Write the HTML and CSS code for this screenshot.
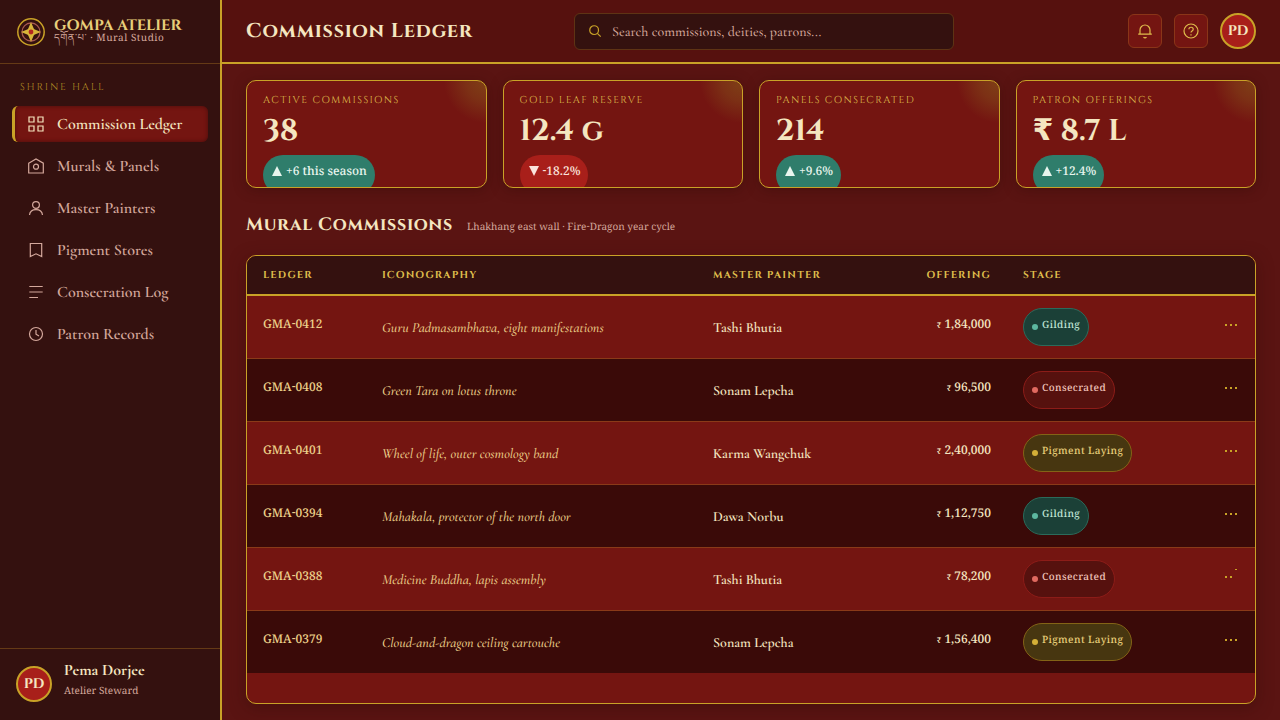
FILE: index.html
```html
<!DOCTYPE html>
<html lang="en">
<head>
<meta charset="utf-8">
<title>Gompa Atelier – Commission Ledger</title>
<link rel="stylesheet" href="styles.css">
</head>
<body>
<div class="app">
  <aside class="sidebar">
    <div class="brand">
      <svg class="brand-mark" viewBox="0 0 28 28" width="28" height="28" aria-hidden="true">
        <circle cx="14" cy="14" r="13.2" fill="none" stroke="#c9a227" stroke-width="1.5"/>
        <circle cx="14" cy="14" r="9" fill="none" stroke="#a85a50" stroke-width="1.3"/>
        <path d="M14 4l2.600 6.200q.4.8 1.200 1.200L24 14l-6.200 2.600q-.8.4-1.200 1.200L14 24l-2.600-6.200q-.4-.8-1.200-1.200L4 14l6.200-2.600q.8-.4 1.200-1.200z" fill="#d8b43a"/>
        <circle cx="14" cy="14" r="2.400" fill="#b3261e"/>
      </svg>
      <div class="brand-text">
        <div class="brand-name">GOMPA ATELIER</div>
        <div class="brand-sub"><span lang="bo">དགོན་པ་</span> · Mural Studio</div>
      </div>
    </div>
    <nav class="nav" aria-label="Shrine Hall">
      <div class="nav-title">SHRINE HALL</div>
      <a class="nav-item active" href="#" aria-current="page"><svg class="icon" viewBox="0 0 16 16"><path d="M1 1h5v5H1zM10 1h5v5h-5zM1 10h5v5H1zM10 10h5v5h-5z"/></svg>Commission Ledger</a>
      <a class="nav-item" href="#"><svg class="icon" viewBox="0 0 16 16"><path d="M.7 5.200L8 1l7.300 4.200V15H.7z"/><circle cx="8" cy="8.700" r="2.500"/></svg>Murals &amp; Panels</a>
      <a class="nav-item" href="#"><svg class="icon" viewBox="0 0 16 16"><circle cx="8" cy="5" r="3.400"/><path d="M1.500 15c.4-3.600 3-5.300 6.500-5.300s6.100 1.700 6.500 5.300"/></svg>Master Painters</a>
      <a class="nav-item" href="#"><svg class="icon" viewBox="0 0 16 16"><path d="M2.300 1.500h11.400v13L8 11.800l-5.700 2.700z"/></svg>Pigment Stores</a>
      <a class="nav-item" href="#"><svg class="icon" viewBox="0 0 16 16"><path d="M1.300 2.500h13.400M1.300 8h13.400M1.300 13.500h8.700"/></svg>Consecration Log</a>
      <a class="nav-item" href="#"><svg class="icon" viewBox="0 0 16 16"><circle cx="8" cy="8" r="6.500"/><path d="M8 4v4.200l3 1.800"/></svg>Patron Records</a>
    </nav>
    <div class="user">
      <div class="avatar">PD</div>
      <div>
        <div class="user-name">Pema Dorjee</div>
        <div class="user-role">Atelier Steward</div>
      </div>
    </div>
  </aside>
  <div class="content">
    <header class="topbar">
      <h1 class="title">Commission Ledger</h1>
      <label class="search">
        <svg class="search-icon" viewBox="0 0 16 16" role="img" aria-label="Search"><circle cx="7" cy="7" r="5"/><path d="M10.700 10.700L14.500 14.500"/></svg>
        <input class="search-input" type="search" placeholder="Search commissions, deities, patrons...">
      </label>
      <div class="actions">
        <button class="icon-btn" type="button" aria-label="Notifications"><svg class="icon" viewBox="0 0 16 16"><path d="M3 11.200V7a5 5 0 0 1 10 0v4.200M1.200 11.200h13.600M6.500 14.200c.8.9 2.200.9 3 0"/></svg></button>
        <button class="icon-btn" type="button" aria-label="Help"><svg class="icon" viewBox="0 0 16 16"><circle cx="8" cy="8" r="7"/><path d="M5.900 6.300c0-2.800 4.300-2.700 4.300-.1C10.200 8 8 7.900 8 9.600M8 11.300v1.200"/></svg></button>
        <div class="avatar">PD</div>
      </div>
    </header>
    <main class="main">
      <section class="stats">
        <article class="stat"><div class="stat-label">ACTIVE COMMISSIONS</div><div class="stat-value">38</div><div class="delta"><svg class="tri" viewBox="0 0 10 10"><path d="M5 0l5 10H0z"/></svg>+6 this season</div></article>
        <article class="stat"><div class="stat-label">GOLD LEAF RESERVE</div><div class="stat-value">12.4 g</div><div class="delta down"><svg class="tri" viewBox="0 0 10 10"><path d="M0 0h10L5 10z"/></svg>-18.2%</div></article>
        <article class="stat"><div class="stat-label">PANELS CONSECRATED</div><div class="stat-value">214</div><div class="delta"><svg class="tri" viewBox="0 0 10 10"><path d="M5 0l5 10H0z"/></svg>+9.6%</div></article>
        <article class="stat"><div class="stat-label">PATRON OFFERINGS</div><div class="stat-value">₹ 8.7 L</div><div class="delta"><svg class="tri" viewBox="0 0 10 10"><path d="M5 0l5 10H0z"/></svg>+12.4%</div></article>
      </section>
      <div class="section-head">
        <h2 class="section-title">Mural Commissions</h2>
        <span class="section-sub">Lhakhang east wall · Fire-Dragon year cycle</span>
      </div>
      <div class="panel">
        <table class="ledger">
          <colgroup><col class="c-id"><col class="c-icon"><col class="c-painter"><col class="c-offer"><col class="c-stage"><col class="c-more"></colgroup>
          <thead><tr><th>LEDGER</th><th>ICONOGRAPHY</th><th>MASTER PAINTER</th><th class="num">OFFERING</th><th>STAGE</th><th></th></tr></thead>
          <tbody>
            <tr><td class="id">GMA-0412</td><td class="work">Guru Padmasambhava, eight manifestations</td><td class="painter">Tashi Bhutia</td><td class="num amount"><span class="cur">₹</span> 1,84,000</td><td><span class="stage gilding">Gilding</span></td><td class="num"><button class="more" type="button" aria-label="More"><svg viewBox="0 0 14 14"><path d="M0 5h2v2H0zM5 5h2v2H5zM10 5h2v2h-2z"/></svg></button></td></tr>
            <tr><td class="id">GMA-0408</td><td class="work">Green Tara on lotus throne</td><td class="painter">Sonam Lepcha</td><td class="num amount"><span class="cur">₹</span> 96,500</td><td><span class="stage consecrated">Consecrated</span></td><td class="num"><button class="more" type="button" aria-label="More"><svg viewBox="0 0 14 14"><path d="M0 5h2v2H0zM5 5h2v2H5zM10 5h2v2h-2z"/></svg></button></td></tr>
            <tr><td class="id">GMA-0401</td><td class="work">Wheel of life, outer cosmology band</td><td class="painter">Karma Wangchuk</td><td class="num amount"><span class="cur">₹</span> 2,40,000</td><td><span class="stage pigment">Pigment Laying</span></td><td class="num"><button class="more" type="button" aria-label="More"><svg viewBox="0 0 14 14"><path d="M0 5h2v2H0zM5 5h2v2H5zM10 5h2v2h-2z"/></svg></button></td></tr>
            <tr><td class="id">GMA-0394</td><td class="work">Mahakala, protector of the north door</td><td class="painter">Dawa Norbu</td><td class="num amount"><span class="cur">₹</span> 1,12,750</td><td><span class="stage gilding">Gilding</span></td><td class="num"><button class="more" type="button" aria-label="More"><svg viewBox="0 0 14 14"><path d="M0 5h2v2H0zM5 5h2v2H5zM10 5h2v2h-2z"/></svg></button></td></tr>
            <tr><td class="id">GMA-0388</td><td class="work">Medicine Buddha, lapis assembly</td><td class="painter">Tashi Bhutia</td><td class="num amount"><span class="cur">₹</span> 78,200</td><td><span class="stage consecrated">Consecrated</span></td><td class="num"><button class="more" type="button" aria-label="More"><svg viewBox="0 0 14 14"><path d="M0 5h2v2H0zM5 5h2v2H5zM10 -2h2v1h-2z"/></svg></button></td></tr>
            <tr><td class="id">GMA-0379</td><td class="work">Cloud-and-dragon ceiling cartouche</td><td class="painter">Sonam Lepcha</td><td class="num amount"><span class="cur">₹</span> 1,56,400</td><td><span class="stage pigment">Pigment Laying</span></td><td class="num"><button class="more" type="button" aria-label="More"><svg viewBox="0 0 14 14"><path d="M0 5h2v2H0zM5 5h2v2H5zM10 5h2v2h-2z"/></svg></button></td></tr>
          </tbody>
        </table>
      </div>
    </main>
  </div>
</div>
</body>
</html>
```

FILE: styles.css
```css
:root {
  --display: "Cinzel", "Liberation Serif", serif;
  --body: "Cormorant Garamond", "EB Garamond", "Liberation Serif", serif;
  --label: "Noto Serif Tibetan", "Noto Serif", "Liberation Serif", serif;
  --gold: #c9a227;
  --gold-light: #dfbd4c;
  --cream: #f5e6c0;
  --rose: #d4a89c;
  --dark: #34110f;
  --red: #741511;
}
* { box-sizing: border-box; }
body { margin: 0; font-family: var(--body); color: var(--cream); background: #5a1412; text-rendering: geometricPrecision; -webkit-font-smoothing: antialiased; }
h1, h2 { margin: 0; font-weight: 600; }
button, input { font: inherit; color: inherit; text-rendering: inherit; }
.app { display: flex; height: 100vh; overflow: hidden; }

.sidebar { flex: none; width: 222px; display: flex; flex-direction: column; background: var(--dark); border-right: 2px solid var(--gold); }
.brand { height: 64px; display: flex; align-items: center; gap: 9px; padding: 0 17px; border-bottom: 1px solid #653a16; }
.brand-mark { flex: none; }
.brand-text { padding-top: 2px; }
.brand-name { font: 700 15px/16px var(--display); color: #e8cf7a; white-space: nowrap; }
.brand-sub { font: 400 10px/14px var(--label); letter-spacing: 0.05em; color: var(--rose); white-space: nowrap; }
.nav { flex: 1; display: flex; flex-direction: column; gap: 6px; padding: 16px 12px; }
.nav-title { font: 500 10px/14px var(--display); letter-spacing: 0.18em; color: #b08b24; padding: 0 8px; margin-bottom: 6px; }
.nav-item { display: flex; align-items: center; gap: 13px; height: 36px; padding: 0 16px; border-radius: 6px; color: var(--rose); text-decoration: none; font-size: 16px; font-weight: 600; line-height: 20px; white-space: nowrap; }
.nav-item.active { background: var(--red); color: var(--cream); border-left: 3px solid var(--gold); padding-left: 13px; box-shadow: inset 0 0 4px #4a0d0b; }
.icon { flex: none; width: 16px; height: 16px; fill: none; stroke: currentColor; stroke-width: 1.2; }
.user { height: 72px; display: flex; align-items: center; gap: 12px; padding: 0 16px 2px; border-top: 1px solid #653a16; }
.user-name { font-size: 16px; font-weight: 700; line-height: 20px; }
.user-role { font: 400 10px/28px var(--label); color: var(--rose); }
.avatar { flex: none; width: 36px; height: 36px; display: flex; align-items: center; justify-content: center; padding-top: 2px; border: 2px solid var(--gold); border-radius: 50%; background: #a81f1a; font: 700 14px/16px var(--display); }

.content { flex: 1; min-width: 0; display: flex; flex-direction: column; }
.topbar { flex: none; height: 64px; display: flex; align-items: center; gap: 20px; padding: 0 24px; background: #56110e; border-bottom: 2px solid var(--gold); }
.title { flex: 1; padding-top: 2px; font: 600 20px/28px var(--display); letter-spacing: 0.04em; white-space: nowrap; }
.search { width: 380px; height: 37px; margin-left: 26px; display: flex; align-items: center; gap: 10px; padding: 0 13px; background: var(--dark); border: 1px solid #5e3314; border-radius: 6px; }
.search-icon { flex: none; width: 14px; height: 14px; fill: none; stroke: var(--gold); stroke-width: 1.4; }
.search-input { flex: 1; min-width: 0; padding: 2px 0 0; border: 0; outline: 0; background: none; font-size: 14px; font-weight: 500; }
.search-input::placeholder { color: var(--rose); opacity: 1; }
.actions { flex: 1; display: flex; align-items: center; justify-content: flex-end; gap: 12px; }
.icon-btn { width: 34px; height: 34px; display: flex; align-items: center; justify-content: center; padding: 0; background: var(--red); border: 1px solid #8a3518; border-radius: 6px; color: var(--gold-light); }

.main { flex: 1; min-height: 0; display: flex; flex-direction: column; padding: 16px 24px; }
.stats { flex: none; display: grid; grid-template-columns: repeat(4, 1fr); gap: 16px; }
.stat { height: 108px; overflow: hidden; padding: 11px 16px; border: 1px solid var(--gold); border-radius: 10px; background: radial-gradient(circle at 100% 0, #7f4016 0, #7c3015 20px, var(--red) 42px); box-shadow: 0 2px 12px #3a0b0a80; }
.stat-label { font: 500 10px/16px var(--display); letter-spacing: 0.14em; color: var(--gold-light); white-space: nowrap; }
.stat-value { font: 800 30px/40px "Cinzel", "DejaVu Sans", serif; margin: 4px 0 3px; }
.delta { display: inline-flex; align-items: center; gap: 4px; height: 40px; padding: 0 8px 0 9px; border-radius: 20px; background: #2f7d6b; color: #e8f5ee; font: 500 12px/16px var(--label); white-space: nowrap; }
.delta.down { background: #a81f1a; color: #fbe3dc; }
.tri { width: 10px; height: 10px; margin-bottom: 8px; fill: currentColor; }

.section-head { flex: none; display: flex; align-items: baseline; gap: 14px; padding: 23px 0 16px; }
.section-title { font: 600 18px/28px var(--display); letter-spacing: 0.04em; }
.section-sub { font: 400 10px/16px var(--label); color: var(--rose); }
.panel { flex: 1; min-height: 0; overflow: hidden; border: 1px solid var(--gold); border-radius: 10px; background: var(--red); box-shadow: 0 4px 16px #3a0b0a80; }
.ledger { width: 100%; table-layout: fixed; border-collapse: separate; border-spacing: 0; }
.c-id { width: 119px; }
.c-painter { width: 200px; }
.c-offer { width: 110px; }
.c-stage { width: 172px; }
.c-more { width: 76px; }
.ledger th { height: 40px; padding: 0 16px; text-align: left; background: var(--dark); border-bottom: 2px solid var(--gold); font: 700 10px/16px var(--display); letter-spacing: 0.12em; color: var(--gold-light); white-space: nowrap; }
.ledger td { height: 63px; padding: 0 16px; border-bottom: 1px solid #8a3a18; white-space: nowrap; }
.ledger tr:nth-child(even) td { background: #3a0a08; }
.ledger tr:last-child td { border-bottom-color: transparent; background-clip: padding-box; }
.ledger th.num, .ledger td.num { text-align: right; }
.ledger td.id, .ledger td.amount { padding-top: 2px; font: 500 12px/16px var(--label); }
.ledger td.work, .ledger td.painter { padding-top: 2px; font-size: 14px; font-weight: 600; }
.ledger td.id, .ledger td.work { color: #ecd08a; }
.ledger td.work { font-style: italic; font-weight: 500; }
.cur { font-size: 8px; }
.stage { display: inline-flex; align-items: center; gap: 4px; height: 38px; padding: 1px 8px 0; border: 1px solid; border-radius: 19px; font: 500 10px/16px var(--label); letter-spacing: 0.04em; vertical-align: middle; }
.stage::before { content: ""; width: 6px; height: 6px; margin-bottom: 2px; border-radius: 50%; background: currentColor; }
.gilding { background: #1b4037; border-color: #2b6b5b; color: #bfe3d3; }
.gilding::before { background: #5cb8a0; }
.consecrated { background: #56110e; border-color: #8c1c18; color: #f0c4bb; }
.consecrated::before { background: #e06a60; }
.pigment { background: #473610; border-color: #836316; color: #e8cf7a; }
.pigment::before { background: #d4af37; }
.more { width: 14px; height: 14px; padding: 0; border: 0; background: none; color: var(--gold); vertical-align: middle; margin-bottom: 4px; }
.more svg { display: block; width: 14px; height: 14px; overflow: visible; fill: currentColor; }
```
